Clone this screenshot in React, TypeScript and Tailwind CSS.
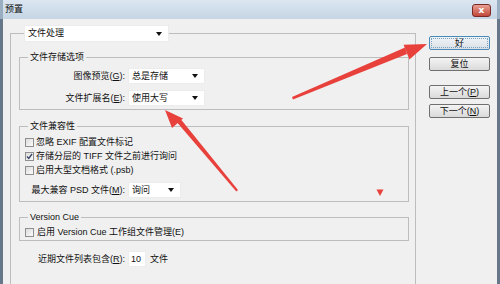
import React from "react";

const Tri = () => (
  <span className="inline-block w-0 h-0 border-l-[3px] border-r-[3px] border-t-[4px] border-l-transparent border-r-transparent border-t-[#111]" />
);

const Select = ({ text, w, h = 16 }: { text: string; w: string; h?: number }) => (
  <div
    className={`flex items-center justify-between bg-white pl-[3px] pr-[6px] border border-[#ececec] ${w}`}
    style={{ height: h }}
  >
    <span className="leading-none">{text}</span>
    <Tri />
  </div>
);

const Check = ({ checked = false }: { checked?: boolean }) => (
  <span className="relative inline-block w-[9px] h-[9px] border border-[#8f8f8f] bg-gradient-to-br from-[#dcdcdc] to-[#fbfbfb] shrink-0">
    {checked && (
      <svg className="absolute left-[0px] top-[0px]" width="7" height="7" viewBox="0 0 7 7">
        <path d="M1 3.5 L2.8 5.5 L6 1" stroke="#3b4a6b" strokeWidth="1.4" fill="none" />
      </svg>
    )}
  </span>
);

const Btn = ({ children, def = false, mt }: { children: React.ReactNode; def?: boolean; mt: string }) => (
  <div
    className={`${mt} w-[61px] h-[14px] rounded-[2px] flex items-center justify-center leading-none text-[9px] ${
      def
        ? "border border-[#4a8ab8] bg-gradient-to-b from-[#f2f5f8] to-[#d9e0e6] outline-1 outline-dotted outline-[#7aa3bf] -outline-offset-[3px]"
        : "border border-[#707070] bg-gradient-to-b from-[#f4f4f4] to-[#dadada]"
    }`}
  >
    {children}
  </div>
);

export default function App() {
  return (
    <div className="relative w-[500px] h-[284px] overflow-hidden bg-[#f0f0f0] text-[9px] text-[#111] font-['Liberation_Sans','Noto_Sans_CJK_SC',sans-serif]">
      {/* title bar */}
      <div className="h-[19px] flex items-start justify-between bg-gradient-to-b from-[#dbe6f1] to-[#c6d5e4] border-l-[3px] border-r-[3px] border-[#9aaec2]">
        <span className="leading-[19px] pl-[2px] text-[9px]">预置</span>
        <div className="mt-[4px] mr-[6px] w-[19px] h-[13px] rounded-[3px] border border-[#7a2a22] bg-gradient-to-b from-[#e8a093] to-[#c0463a] flex items-center justify-center">
          <span className="text-white font-bold text-[9px] leading-none font-['DejaVu_Sans',sans-serif]">x</span>
        </div>
      </div>

      {/* body */}
      <div className="h-[265px] flex items-start border-l-[3px] border-r-[3px] border-[#66778a]">
        <fieldset className="ml-[7px] mt-[6px] w-[406px] h-[270px] border border-[#bdbdbd] shrink-0">
          <legend className="ml-[13px]">
            <Select text="文件处理" w="w-[145px]" h={17} />
          </legend>

          {/* 文件存储选项 */}
          <fieldset className="ml-[8px] mt-[9px] w-[390px] border border-[#bdbdbd] pt-[5px] pb-[3px]">
            <legend className="ml-[8px] px-[2px] leading-[12px]">文件存储选项</legend>
            <div className="grid grid-cols-[105px_77px] gap-x-[3px] gap-y-[6px] items-center">
              <span className="text-right leading-none">
                图像预览(<u>G</u>):
              </span>
              <Select text="总是存储" w="w-[77px]" />
              <span className="text-right leading-none">
                文件扩展名(<u>E</u>):
              </span>
              <Select text="使用大写" w="w-[77px]" />
            </div>
          </fieldset>

          {/* 文件兼容性 */}
          <fieldset className="ml-[8px] mt-[10px] w-[390px] border border-[#bdbdbd] pt-[3px] pb-[3px]">
            <legend className="ml-[8px] px-[2px] leading-[12px]">文件兼容性</legend>
            <div className="h-[14px] flex items-center pl-[5px] gap-[2px]">
              <Check />
              <span className="leading-none">忽略 EXIF 配置文件标记</span>
            </div>
            <div className="h-[14px] flex items-center pl-[5px] gap-[2px]">
              <Check checked />
              <span className="leading-none">存储分层的 TIFF 文件之前进行询问</span>
            </div>
            <div className="h-[14px] flex items-center pl-[5px] gap-[2px]">
              <Check />
              <span className="leading-none">启用大型文档格式 (.psb)</span>
            </div>
            <div className="mt-[5px] grid grid-cols-[105px_53px] gap-x-[3px] items-center">
              <span className="text-right leading-none">
                最大兼容 PSD 文件(<u>M</u>):
              </span>
              <Select text="询问" w="w-[53px]" />
            </div>
          </fieldset>

          {/* Version Cue */}
          <fieldset className="ml-[8px] mt-[9px] w-[390px] border border-[#bdbdbd] pt-[2px] pb-[1px]">
            <legend className="ml-[8px] px-[2px] leading-[12px]">Version Cue</legend>
            <div className="h-[14px] flex items-center pl-[5px] gap-[3px]">
              <Check />
              <span className="leading-none">启用 Version Cue 工作组文件管理(E)</span>
            </div>
          </fieldset>

          <div className="mt-[10px] flex items-center">
            <span className="w-[114px] text-right leading-none">
              近期文件列表包含(<u>R</u>):
            </span>
            <div className="ml-[3px] w-[18px] h-[16px] bg-white border border-[#ececec] flex items-center pl-[2px] leading-none">
              10
            </div>
            <span className="ml-[4px] leading-none">文件</span>
          </div>
        </fieldset>

        {/* buttons */}
        <div className="ml-[13px] flex flex-col">
          <Btn def mt="mt-[17px]">好</Btn>
          <Btn mt="mt-[7px]">复位</Btn>
          <Btn mt="mt-[14px]">
            上一个(<u>P</u>)
          </Btn>
          <Btn mt="mt-[5px]">
            下一个(<u>N</u>)
          </Btn>
        </div>
      </div>

      {/* red annotation arrows */}
      <svg className="absolute left-0 top-0 pointer-events-none" width="500" height="284" viewBox="0 0 500 284">
        <polygon points="292,97 293,99.5 407,54 405,47.5" fill="#e8413c" />
        <polygon points="427,44 403.6,44.7 409.4,59.5" fill="#e8413c" />
        <polygon points="238,190 236.3,191.4 175,120 179,117" fill="#e8413c" />
        <polygon points="165,110 183,118.5 172,128" fill="#e8413c" />
        <polygon points="376.5,189.5 383.5,189.5 380,196" fill="#e8413c" />
      </svg>
    </div>
  );
}
